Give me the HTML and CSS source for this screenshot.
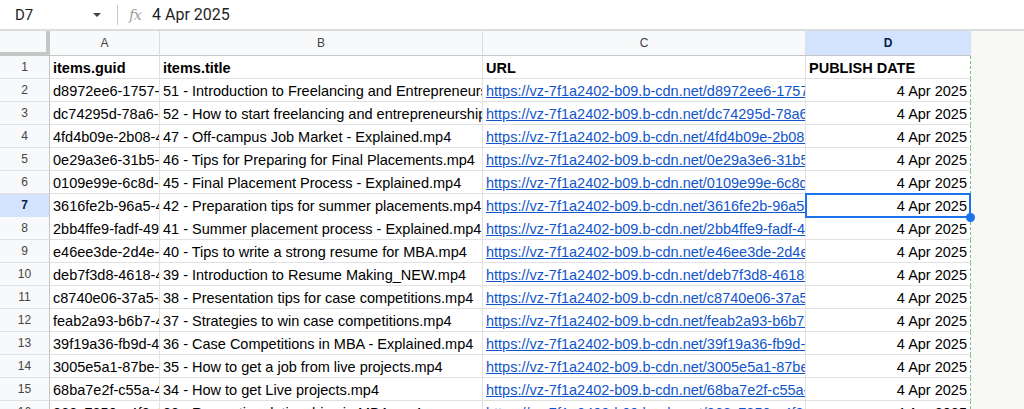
FILE: index.html
```html
<!DOCTYPE html>
<html lang="en">
<head>
    <meta charset="UTF-8">
    <meta name="viewport" content="width=device-width, initial-scale=1.0">
    <title>Sheet</title>
    <link rel="stylesheet" href="styles.css">
</head>
<body>
    <div class="formula-bar">
        <div class="name-box">D7</div>
        <span class="name-arrow"></span>
        <span class="divider"></span>
        <span class="fx">fx</span>
        <div class="formula-value">4 Apr 2025</div>
    </div>

    <div class="sheet">
        <div class="row head-row">
            <div class="corner"></div>
            <div class="col-head">A</div>
            <div class="col-head">B</div>
            <div class="col-head">C</div>
            <div class="col-head active">D</div>
        </div>

        <div class="row">
            <div class="row-head">1</div>
            <div class="cell bold">items.guid</div>
            <div class="cell bold">items.title</div>
            <div class="cell bold">URL</div>
            <div class="cell bold date">PUBLISH DATE</div>
        </div>
        <div class="row">
            <div class="row-head">2</div>
            <div class="cell">d8972ee6-1757-4c2e-9a1d</div>
            <div class="cell">51 - Introduction to Freelancing and Entrepreneurship.mp4</div>
            <div class="cell"><a href="#">https://vz-7f1a2402-b09.b-cdn.net/d8972ee6-1757-4c2e-9a1d</a></div>
            <div class="cell date right">4 Apr 2025</div>
        </div>
        <div class="row">
            <div class="row-head">3</div>
            <div class="cell">dc74295d-78a6-4f0b-8e21</div>
            <div class="cell">52 - How to start freelancing and entrepreneurship.mp4</div>
            <div class="cell"><a href="#">https://vz-7f1a2402-b09.b-cdn.net/dc74295d-78a6-4f0b-8e21</a></div>
            <div class="cell date right">4 Apr 2025</div>
        </div>
        <div class="row">
            <div class="row-head">4</div>
            <div class="cell">4fd4b09e-2b08-4a7c-b3f2</div>
            <div class="cell">47 - Off-campus Job Market - Explained.mp4</div>
            <div class="cell"><a href="#">https://vz-7f1a2402-b09.b-cdn.net/4fd4b09e-2b08-4a7c-b3f2</a></div>
            <div class="cell date right">4 Apr 2025</div>
        </div>
        <div class="row">
            <div class="row-head">5</div>
            <div class="cell">0e29a3e6-31b5-4d19-a0c4</div>
            <div class="cell">46 - Tips for Preparing for Final Placements.mp4</div>
            <div class="cell"><a href="#">https://vz-7f1a2402-b09.b-cdn.net/0e29a3e6-31b5-4d19-a0c4</a></div>
            <div class="cell date right">4 Apr 2025</div>
        </div>
        <div class="row">
            <div class="row-head">6</div>
            <div class="cell">0109e99e-6c8d-4e55-9b70</div>
            <div class="cell">45 - Final Placement Process - Explained.mp4</div>
            <div class="cell"><a href="#">https://vz-7f1a2402-b09.b-cdn.net/0109e99e-6c8d-4e55-9b70</a></div>
            <div class="cell date right">4 Apr 2025</div>
        </div>
        <div class="row">
            <div class="row-head active">7</div>
            <div class="cell">3616fe2b-96a5-4b8e-a612</div>
            <div class="cell">42 - Preparation tips for summer placements.mp4</div>
            <div class="cell"><a href="#">https://vz-7f1a2402-b09.b-cdn.net/3616fe2b-96a5-4b8e-a612</a></div>
            <div class="cell date right selected">4 Apr 2025</div>
        </div>
        <div class="row">
            <div class="row-head">8</div>
            <div class="cell">2bb4ffe9-fadf-49c1-8d03</div>
            <div class="cell">41 - Summer placement process - Explained.mp4</div>
            <div class="cell"><a href="#">https://vz-7f1a2402-b09.b-cdn.net/2bb4ffe9-fadf-49c1-8d03</a></div>
            <div class="cell date right">4 Apr 2025</div>
        </div>
        <div class="row">
            <div class="row-head">9</div>
            <div class="cell">e46ee3de-2d4e-4f6a-b2c8</div>
            <div class="cell">40 - Tips to write a strong resume for MBA.mp4</div>
            <div class="cell"><a href="#">https://vz-7f1a2402-b09.b-cdn.net/e46ee3de-2d4e-4f6a-b2c8</a></div>
            <div class="cell date right">4 Apr 2025</div>
        </div>
        <div class="row">
            <div class="row-head">10</div>
            <div class="cell">deb7f3d8-4618-4a90-9e3b</div>
            <div class="cell">39 - Introduction to Resume Making_NEW.mp4</div>
            <div class="cell"><a href="#">https://vz-7f1a2402-b09.b-cdn.net/deb7f3d8-4618-4a90-9e3b</a></div>
            <div class="cell date right">4 Apr 2025</div>
        </div>
        <div class="row">
            <div class="row-head">11</div>
            <div class="cell">c8740e06-37a5-4c21-8f47</div>
            <div class="cell">38 - Presentation tips for case competitions.mp4</div>
            <div class="cell"><a href="#">https://vz-7f1a2402-b09.b-cdn.net/c8740e06-37a5-4c21-8f47</a></div>
            <div class="cell date right">4 Apr 2025</div>
        </div>
        <div class="row">
            <div class="row-head">12</div>
            <div class="cell">feab2a93-b6b7-4d8e-a915</div>
            <div class="cell">37 - Strategies to win case competitions.mp4</div>
            <div class="cell"><a href="#">https://vz-7f1a2402-b09.b-cdn.net/feab2a93-b6b7-4d8e-a915</a></div>
            <div class="cell date right">4 Apr 2025</div>
        </div>
        <div class="row">
            <div class="row-head">13</div>
            <div class="cell">39f19a36-fb9d-4e02-b7a1</div>
            <div class="cell">36 - Case Competitions in MBA - Explained.mp4</div>
            <div class="cell"><a href="#">https://vz-7f1a2402-b09.b-cdn.net/39f19a36-fb9d-4e02-b7a1</a></div>
            <div class="cell date right">4 Apr 2025</div>
        </div>
        <div class="row">
            <div class="row-head">14</div>
            <div class="cell">3005e5a1-87be-4b63-9c2d</div>
            <div class="cell">35 - How to get a job from live projects.mp4</div>
            <div class="cell"><a href="#">https://vz-7f1a2402-b09.b-cdn.net/3005e5a1-87be-4b63-9c2d</a></div>
            <div class="cell date right">4 Apr 2025</div>
        </div>
        <div class="row">
            <div class="row-head">15</div>
            <div class="cell">68ba7e2f-c55a-4f18-a6e0</div>
            <div class="cell">34 - How to get Live projects.mp4</div>
            <div class="cell"><a href="#">https://vz-7f1a2402-b09.b-cdn.net/68ba7e2f-c55a-4f18-a6e0</a></div>
            <div class="cell date right">4 Apr 2025</div>
        </div>
        <div class="row">
            <div class="row-head">16</div>
            <div class="cell">868c7850-a4f8-4e7b-b091</div>
            <div class="cell">33 - Romantic relationships in MBA.mp4</div>
            <div class="cell"><a href="#">https://vz-7f1a2402-b09.b-cdn.net/868c7850-a4f8-4e7b-b091</a></div>
            <div class="cell date right">4 Apr 2025</div>
        </div>
    </div>
</body>
</html>
```

FILE: styles.css
```css
/* General */
body {
    margin: 0;
    padding: 0;
    height: 409px;
    overflow: hidden;
    font-family: "Liberation Sans", Arial, sans-serif;
    background-color: #f8f9f7;
    color: #000;
}

/* Formula bar */
.formula-bar {
    display: flex;
    align-items: center;
    height: 29px;
    background-color: #fff;
    border-bottom: 2px solid #dadce0;
    font-family: Roboto, "Liberation Sans", sans-serif;
    color: #1f1f1f;
}

.name-box {
    width: 78px;
    padding-left: 15px;
    font-size: 15px;
}

.name-arrow {
    width: 0;
    height: 0;
    border-left: 4px solid transparent;
    border-right: 4px solid transparent;
    border-top: 4px solid #444;
    margin-right: 16px;
}

.divider {
    width: 1px;
    height: 20px;
    background-color: #c4c7c5;
    margin-right: 11px;
}

.fx {
    font-family: "DejaVu Serif", serif;
    font-style: italic;
    font-size: 15px;
    color: #a0a0a0;
    margin-right: 11px;
    letter-spacing: -1px;
}

.formula-value {
    font-size: 16px;
}

/* Grid */
.sheet {
    width: 971px;
}

.row {
    display: grid;
    grid-template-columns: 50px 110px 323px 323px 165px;
    height: 23px;
}

.head-row {
    height: 25px;
}

.corner {
    box-sizing: border-box;
    background-color: #f8f9fa;
    border-right: 4px solid #c4c7c5;
    border-bottom: 4px solid #c4c7c5;
}

.col-head {
    box-sizing: border-box;
    background-color: #f8f9fa;
    border-right: 1px solid #dadce0;
    border-bottom: 1px solid #c4c7c5;
    font-size: 12px;
    color: #444;
    text-align: center;
    line-height: 24px;
}

.col-head.active {
    background-color: #d3e3fd;
    color: #041e49;
    font-weight: bold;
}

.row-head {
    box-sizing: border-box;
    background-color: #f8f9fa;
    border-right: 1px solid #c4c7c5;
    border-bottom: 1px solid #e1e1e1;
    font-size: 12px;
    color: #444;
    text-align: center;
    line-height: 22px;
}

.row-head.active {
    background-color: #d3e3fd;
    color: #041e49;
    font-weight: bold;
}

.cell {
    box-sizing: border-box;
    background-color: #fff;
    border-right: 1px solid #e1e1e1;
    border-bottom: 1px solid #e1e1e1;
    padding: 1px 3px 0 3px;
    font-size: 14.5px;
    line-height: 22px;
    white-space: nowrap;
    overflow: hidden;
}

.cell a {
    color: #1155cc;
    text-decoration: underline;
}

.bold {
    font-weight: bold;
}

.right {
    text-align: right;
}

.date {
    border-right: 1px dashed #7cc17a;
}

/* Selected cell */
.selected {
    position: relative;
    overflow: visible;
}

.selected::after {
    content: "";
    position: absolute;
    left: -1px;
    top: -1px;
    right: -1px;
    bottom: -1px;
    border: 2px solid #1a73e8;
}

.selected::before {
    content: "";
    position: absolute;
    right: -5px;
    bottom: -5px;
    width: 9px;
    height: 9px;
    border-radius: 50%;
    background-color: #1a73e8;
    z-index: 2;
}
```
